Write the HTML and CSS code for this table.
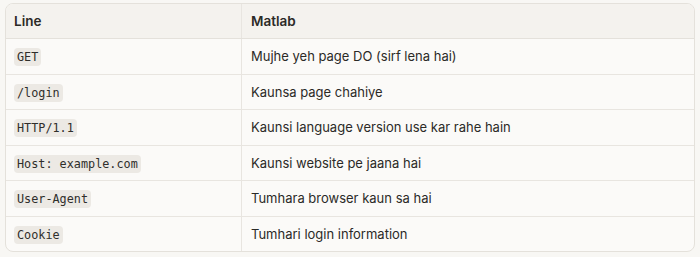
FILE: index.html
```html
<!DOCTYPE html>
<html>
<head>
<meta charset="utf-8">
<link rel="stylesheet" href="styles.css">
</head>
<body>
<div class="wrap">
<table class="tbl">
  <thead>
    <tr><th class="c1">Line</th><th>Matlab</th></tr>
  </thead>
  <tbody>
    <tr><td class="c1"><code>GET</code></td><td>Mujhe yeh page DO (sirf lena hai)</td></tr>
    <tr><td class="c1"><code>/login</code></td><td>Kaunsa page chahiye</td></tr>
    <tr><td class="c1"><code>HTTP/1.1</code></td><td>Kaunsi language version use kar rahe hain</td></tr>
    <tr><td class="c1"><code>Host: example.com</code></td><td>Kaunsi website pe jaana hai</td></tr>
    <tr><td class="c1"><code>User-Agent</code></td><td>Tumhara browser kaun sa hai</td></tr>
    <tr><td class="c1"><code>Cookie</code></td><td>Tumhari login information</td></tr>
  </tbody>
</table>
</div>
</body>
</html>
```
FILE: styles.css
```css
html, body {
  margin: 0;
  background: #f8f7f4;
}
body {
  padding: 3px 5px 0 5px;
  font-family: Inter, "Noto Sans", sans-serif;
  color: #2b2a27;
}
.wrap {
  width: 690px;
  border: 1px solid #e4e1db;
  border-radius: 8px;
  overflow: hidden;
  background: #fbfaf8;
  box-sizing: border-box;
}
.tbl {
  width: 100%;
  border-collapse: collapse;
  font-size: 13px;
}
.tbl th {
  background: #f4f2ee;
  font-weight: 600;
  text-align: left;
  height: 34px;
  padding: 0 9px;
  border-bottom: 1px solid #e4e1db;
  font-size: 13.5px;
}
.tbl td {
  height: 34.5px;
  padding: 0 9px;
  border-top: 1px solid #e8e5e0;
}
.tbl tbody tr:first-child td { border-top: none; }
.tbl .c1 {
  width: 218px;
  border-right: 1px solid #e8e5e0;
  padding-left: 8px;
}
code {
  font-family: "DejaVu Sans Mono", monospace;
  font-size: 11.8px;
  background: #ece9e4;
  border-radius: 4px;
  padding: 2px 3px;
  color: #2f2e2b;
}
```
